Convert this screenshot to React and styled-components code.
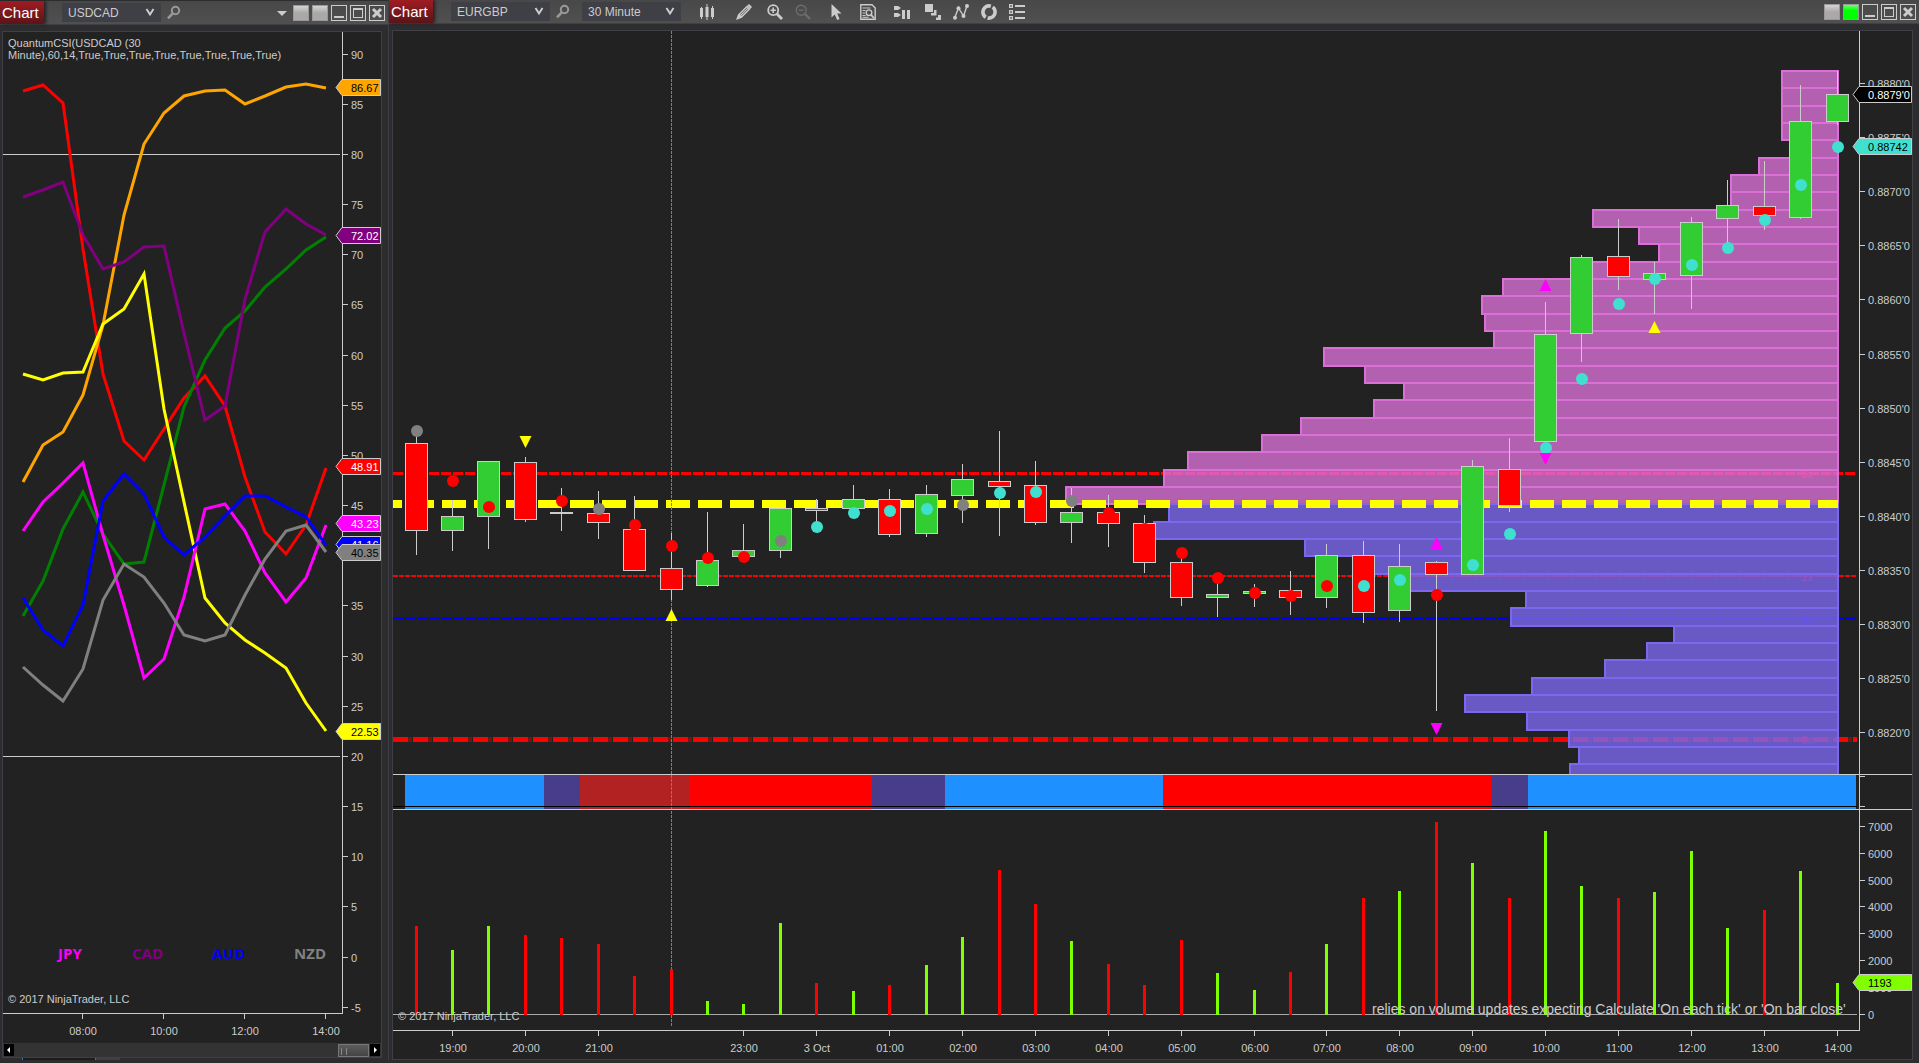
import React from "react";
import styled, { createGlobalStyle } from "styled-components";

const GlobalStyle = createGlobalStyle`
  * {
    box-sizing: border-box;
  }

  body {
    margin: 0;
    background: #2d2d30;
    color: #cccccc;
    font-family: "Liberation Sans", Arial, sans-serif;
    font-size: 12px;
  }
`;

const Desktop = styled.div`
  display: grid;
  grid-template-columns: 389fr 1530fr;
`;

const ChartWindow = styled.section`
  display: flex;
  flex-direction: column;
  min-width: 0;
  padding-top: ${(props) => (props.$raised ? 0 : 1)}px;
  border-right: ${(props) => (props.$raised ? "none" : "1px solid #3f3f46")};
  background: #2d2d30;
`;

const TitleBar = styled.header`
  display: flex;
  align-items: center;
  height: 24px;
  padding-right: ${(props) => props.$right}px;
  background: linear-gradient(#484848, #505050);
  border-bottom: 1px solid #3f3f46;
`;

const Tab = styled.h1`
  align-self: stretch;
  width: 44px;
  margin: 0 18px 0 0;
  padding-left: 2px;
  background: linear-gradient(#a01c22, #5a1418);
  box-shadow: 2px 0 3px #222222;
  color: #ffffff;
  font-size: 15px;
  font-weight: 400;
  line-height: 23px;
`;

const SelectBox = styled.label`
  position: relative;
  width: 99px;
  height: 19px;
  margin-left: ${(props) => props.$gap || 0}px;
`;

const Select = styled.select`
  appearance: none;
  width: 100%;
  height: 100%;
  padding: 0 20px 0 6px;
  border: none;
  border-radius: 0;
  background: #3f3f46;
  color: #cccccc;
  font-family: inherit;
  font-size: 12px;
`;

const Chevron = styled.svg`
  position: absolute;
  right: 6px;
  top: 5px;
  pointer-events: none;
`;

const IconButton = styled.button`
  display: flex;
  flex: none;
  width: 16px;
  height: 16px;
  margin-left: ${(props) => props.$gap}px;
  padding: 0;
  border: none;
  background: none;
  color: ${(props) => (props.$dim ? "#6c6c6c" : "#cccccc")};
`;

const WindowButtons = styled.div`
  display: flex;
  align-items: center;
  gap: 3px;
  margin-left: auto;
`;

const WindowButton = styled.button`
  display: flex;
  width: 16px;
  height: 16px;
  padding: 0;
  border: 1px solid #cccccc;
  background: none;
  color: #cccccc;
`;

const LinkButton = styled(WindowButton)`
  border-color: #999999;
  background: ${(props) =>
    props.$on
      ? "linear-gradient(#6cff6c, #00ff00 40%)"
      : "linear-gradient(#d4d4d4, #aca8a8 50%)"};
`;

const Frame = styled.div`
  margin: 6px ${(props) => props.$right}px 0 ${(props) => props.$left}px;
  border: 1px solid #3f3f46;
  background: #222222;
`;

const Plot = styled.svg`
  display: block;
  width: 100%;
  height: auto;
  font-family: "Liberation Sans", Arial, sans-serif;
  font-size: 11px;
`;

const ScrollBar = styled.div`
  display: flex;
  align-items: center;
  height: 14px;
  padding: 0 1px;
  background: #333333;
`;

const ScrollButton = styled.button`
  width: 10px;
  height: 12px;
  padding: 0;
  border: none;
  background: #000000;
  color: #ffffff;
`;

const ScrollThumb = styled.div`
  width: 31px;
  height: 13px;
  margin: 0 1px 0 auto;
  padding: 3px 2px;
  border: 1px solid #777777;
  background: linear-gradient(#5c5c5c, #444444);

  &::before {
    content: "";
    display: block;
    width: 4px;
    height: 7px;
    border: 1px solid #888888;
    border-width: 0 1px;
  }
`;

const Taskbar = styled.footer`
  display: flex;
  flex: 1;
  padding-left: ${(props) => props.$left}px;
`;

const TaskTab = styled.div`
  width: 74px;
  border: 1px solid #1c7ec8;
  border-width: 0 1px;
  background: #1c1c1c;
`;

const TaskAdd = styled.div`
  width: 24px;
  background: #3f3f46;
`;

const RED = "#ff0000";
const GREEN = "#32cd32";
const GRAY = "#808080";
const CYAN = "#40e0d0";
const LINE = "#cccccc";

/* strength chart */

const strengthX = [23, 43, 63, 83, 103, 124, 144, 164, 184, 205, 225, 245, 265, 286, 306, 326];

const strength = [
  { color: RED, y: [91, 85, 103, 249, 374, 441, 460, 429, 398, 376, 406, 477, 532, 554, 525, 468] },
  { color: "#008000", y: [616, 581, 529, 492, 534, 564, 562, 485, 407, 360, 328, 311, 287, 269, 250, 237] },
  { color: "#ffa500", y: [482, 445, 432, 395, 325, 215, 144, 113, 96, 91, 90, 104, 96, 87, 84, 88] },
  { color: "#ffff00", y: [374, 380, 373, 372, 324, 309, 274, 409, 502, 598, 623, 640, 653, 668, 703, 731] },
  { color: "#ff00ff", y: [531, 502, 483, 463, 535, 605, 678, 659, 597, 509, 504, 531, 573, 602, 578, 525] },
  { color: "#800080", y: [197, 190, 182, 235, 269, 262, 247, 246, 333, 420, 406, 299, 232, 209, 224, 235] },
  { color: "#0000ff", y: [598, 630, 646, 605, 501, 474, 494, 537, 555, 537, 516, 496, 496, 507, 517, 545] },
  { color: GRAY, y: [667, 685, 701, 669, 600, 564, 577, 603, 635, 641, 635, 595, 559, 531, 525, 552] },
];

const strengthTags = [
  { y: 87, fill: "#ffa500", ink: "#000000", text: "86.67" },
  { y: 235, fill: "#800080", ink: "#ffffff", text: "72.02" },
  { y: 466, fill: RED, ink: "#ffffff", text: "48.91" },
  { y: 523, fill: "#ff00ff", ink: "#ffffff", text: "43.23" },
  { y: 544, fill: "#0000ff", ink: "#ffffff", text: "41.16" },
  { y: 552, fill: GRAY, ink: "#000000", text: "40.35" },
  { y: 731, fill: "#ffff00", ink: "#000000", text: "22.53" },
];

// 40 stays off the scale while the price tags cover it
const strengthScale = [90, 85, 80, 75, 70, 65, 60, 55, 50, 45, 35, 30, 25, 20, 15, 10, 5, 0, -5];

const strengthTimes = [
  { x: 82, text: "08:00" },
  { x: 163, text: "10:00" },
  { x: 244, text: "12:00" },
  { x: 325, text: "14:00" },
];

const currencies = [
  { x: 58, text: "JPY", color: "#ff00ff" },
  { x: 132, text: "CAD", color: "#800080" },
  { x: 212, text: "AUD", color: "#0000ff" },
  { x: 294, text: "NZD", color: "#808080" },
];

/* price chart: high, body top, body bottom, low, rising, dot y, dot color, volume top, volume up */

const bars = [
  [436, 443, 531, 555, 0, 431, GRAY, 926, 0],
  [500, 516, 531, 551, 1, 481, RED, 950, 1],
  [461, 461, 517, 549, 1, 507, RED, 926, 1],
  [457, 462, 520, 522, 0, null, null, 935, 0],
  [488, 512, 514, 531, 0, 501, RED, 938, 0],
  [491, 513, 523, 539, 0, 509, GRAY, 944, 0],
  [496, 529, 571, 571, 0, 525, RED, 976, 0],
  [533, 568, 590, 600, 0, 546, RED, 969, 0],
  [512, 560, 586, 587, 1, 558, RED, 1001, 1],
  [524, 550, 557, 557, 1, 557, RED, 1004, 1],
  [508, 508, 551, 558, 1, 541, GRAY, 923, 1],
  [499, 508, 511, 527, 0, 527, CYAN, 983, 0],
  [485, 499, 509, 509, 1, 513, CYAN, 991, 1],
  [489, 499, 535, 537, 0, 511, CYAN, 985, 0],
  [485, 494, 534, 537, 1, 509, CYAN, 965, 1],
  [464, 479, 496, 523, 1, 505, GRAY, 937, 1],
  [431, 481, 487, 536, 0, 493, CYAN, 870, 0],
  [461, 485, 523, 525, 0, 492, CYAN, 904, 0],
  [488, 512, 523, 543, 1, 501, GRAY, 941, 1],
  [495, 512, 524, 547, 0, 513, RED, 964, 0],
  [515, 523, 563, 573, 0, 529, RED, 985, 0],
  [556, 562, 598, 606, 0, 553, RED, 940, 0],
  [575, 594, 598, 617, 1, 578, RED, 973, 1],
  [584, 591, 594, 607, 1, 593, RED, 990, 1],
  [571, 590, 598, 615, 0, 596, RED, 972, 0],
  [544, 555, 598, 608, 1, 586, RED, 944, 1],
  [541, 555, 613, 623, 0, 586, CYAN, 898, 0],
  [544, 566, 611, 622, 1, 580, CYAN, 891, 1],
  [561, 562, 575, 711, 0, 595, RED, 822, 0],
  [460, 466, 575, 575, 1, 565, CYAN, 863, 1],
  [438, 469, 506, 512, 0, 534, CYAN, 898, 0],
  [302, 334, 442, 442, 1, 448, CYAN, 831, 1],
  [255, 257, 334, 362, 1, 379, CYAN, 886, 1],
  [219, 256, 277, 290, 0, 304, CYAN, 898, 0],
  [262, 273, 280, 314, 1, 279, CYAN, 892, 1],
  [217, 222, 276, 309, 1, 265, CYAN, 851, 1],
  [180, 205, 219, 248, 1, 248, CYAN, 928, 1],
  [161, 206, 216, 230, 0, 220, CYAN, 910, 0],
  [85, 121, 218, 219, 1, 185, CYAN, 871, 1],
  [71, 94, 122, 125, 1, 147, CYAN, 983, 1],
];

const barX = (i) => Math.floor(416.05 + i * 36.435);

const signals = [
  { bar: 3, y: 436, down: true, color: "#ffff00" },
  { bar: 7, y: 609, color: "#ffff00" },
  { bar: 28, y: 537, color: "#ff00ff" },
  { bar: 28, y: 723, down: true, color: "#ff00ff" },
  { bar: 31, y: 279, color: "#ff00ff" },
  { bar: 31, y: 453, down: true, color: "#ff00ff" },
  { bar: 34, y: 321, color: "#ffff00" },
];

// left edge of each volume profile row, from the top down
const profile = [
  1781, 1781, 1781, 1781, 1797, 1758, 1730, 1730, 1592, 1638, 1658, 1585, 1502,
  1481, 1484, 1493, 1323, 1364, 1403, 1373, 1300, 1261, 1187, 1163, 1065, 1168,
  1153, 1304, 1365, 1395, 1525, 1510, 1673, 1646, 1604, 1531, 1464, 1526, 1568,
  1578, 1569,
];
const PROFILE_UPPER = 25;
const profileY = (i) => Math.round(70 + i * 17.33);

const levels = [
  { y: 473, width: 3, on: 10, gap: 2, color: RED, shade: "#7a1010", text: "3x" },
  { y: 576, width: 2, on: 5, gap: 1, color: RED, shade: "#7a1010", text: "2x" },
  { y: 618, width: 3, on: 10, gap: 2, color: "#0000ff", shade: "#101070", text: "3x" },
  { y: 739, width: 5, on: 15, gap: 5, color: RED, shade: "#7a1010", text: "5x" },
];

const trend = [
  { x: 405, end: 544, color: "#1e90ff" },
  { x: 544, end: 580, color: "#483d8b" },
  { x: 580, end: 690, color: "#b22222" },
  { x: 690, end: 872, color: RED },
  { x: 872, end: 945, color: "#483d8b" },
  { x: 945, end: 1163, color: "#1e90ff" },
  { x: 1163, end: 1491, color: RED },
  { x: 1491, end: 1528, color: "#483d8b" },
  { x: 1528, end: 1856, color: "#1e90ff" },
];

const prices = [
  "0.8880'0", "0.8875'0", "0.8870'0", "0.8865'0", "0.8860'0", "0.8855'0", "0.8850'0",
  "0.8845'0", "0.8840'0", "0.8835'0", "0.8830'0", "0.8825'0", "0.8820'0",
];

const volumes = [7000, 6000, 5000, 4000, 3000, 2000, 1000, 0];

const times = [
  [1, "19:00"], [3, "20:00"], [5, "21:00"], [9, "23:00"], [11, "3 Oct"], [13, "01:00"],
  [15, "02:00"], [17, "03:00"], [19, "04:00"], [21, "05:00"], [23, "06:00"], [25, "07:00"],
  [27, "08:00"], [29, "09:00"], [31, "10:00"], [33, "11:00"], [35, "12:00"], [37, "13:00"],
  [39, "14:00"],
];

function Tag({ x, y, right, fill, ink, text }) {
  return (
    <g>
      <path
        d={`M${x} ${y + 0.5}L${x + 6} ${y - 7.5}H${right}V${y + 8.5}H${x + 6}Z`}
        fill={fill}
        stroke={LINE}
      />
      <text x={x + 15} y={y + 5} fill={ink}>
        {text}
      </text>
    </g>
  );
}

function StrengthPlot() {
  return (
    <Plot viewBox="3 32 378 1011" role="img" aria-label="Currency strength">
      <g fill={LINE} shapeRendering="crispEdges">
        <rect x="3" y="154" width="337" height="1" />
        <rect x="3" y="756" width="337" height="1" />
        <rect x="342" y="32" width="1" height="982" />
        <rect x="3" y="1013" width="340" height="1" />
        {strengthTimes.map((t) => (
          <rect key={t.text} x={t.x} y="1014" width="1" height="5" />
        ))}
      </g>
      {strengthScale.map((v) => {
        const y = Math.round(154 + (80 - v) * 10.033);
        return (
          <g key={v} fill={LINE}>
            <rect x="343" y={y} width="5" height="1" />
            <text x="351" y={y + 5}>{v}</text>
          </g>
        );
      })}
      {strength.map((s) => (
        <polyline
          key={s.color}
          points={s.y.map((y, i) => `${strengthX[i]},${y}`).join(" ")}
          fill="none"
          stroke={s.color}
          strokeWidth="3"
        />
      ))}
      {strengthTags.map((t) => (
        <Tag key={t.text} x={336} right={380.5} {...t} />
      ))}
      <g fill={LINE}>
        <text x="8" y="47">QuantumCSI(USDCAD (30</text>
        <text x="8" y="59">Minute),60,14,True,True,True,True,True,True,True,True)</text>
        <text x="8" y="1003">© 2017 NinjaTrader, LLC</text>
        {strengthTimes.map((t) => (
          <text key={t.text} x={t.x + 1} y="1035" textAnchor="middle">
            {t.text}
          </text>
        ))}
      </g>
      <g fontFamily="Open Sans, sans-serif" fontSize="15" fontWeight="700">
        {currencies.map((c) => (
          <text key={c.text} x={c.x} y="959" fill={c.color}>
            {c.text}
          </text>
        ))}
      </g>
    </Plot>
  );
}

function Levels() {
  return levels.map((l) => {
    const y = l.width % 2 ? l.y + 0.5 : l.y;
    return (
      <g key={l.y} strokeWidth={l.width} shapeRendering="crispEdges">
        <path d={`M393 ${y}H1857`} stroke={l.shade} strokeDasharray={`${l.on + l.gap - 1} 1`} />
        <path d={`M393 ${y}H1857`} stroke={l.color} strokeDasharray={`${l.on} ${l.gap}`} />
        <text x="1807" y={l.y + 5} fill={l.color} textAnchor="middle">
          {l.text}
        </text>
      </g>
    );
  });
}

function Profile() {
  return (
    <g strokeWidth="2" shapeRendering="crispEdges" clipPath="url(#pricePane)">
      {profile.map((x, i) => {
        const y = profileY(i);
        const color = i < PROFILE_UPPER ? "#da70d6" : "#7b68ee";
        return (
          <g key={i}>
            <rect x={x} y={y} width={1838 - x} height={profileY(i + 1) - y} fill={color} fillOpacity="0.8" />
            <rect x={x + 1} y={y + 1} width={1837 - x} height={profileY(i + 1) - y} fill="none" stroke={color} />
          </g>
        );
      })}
    </g>
  );
}

function Candles() {
  return bars.map(([high, top, bottom, low, up, dot, dotColor], i) => {
    const x = barX(i);
    return (
      <g key={i}>
        <rect x={x} y={high} width="1" height={low - high} fill={LINE} />
        <rect
          x={x - 10.5}
          y={top + 0.5}
          width="22"
          height={bottom - top - 1}
          fill={up ? GREEN : RED}
          stroke={LINE}
        />
        {dot && <circle cx={x + 1} cy={dot} r="6" fill={dotColor} />}
      </g>
    );
  });
}

function Signals() {
  return signals.map((s) => {
    const x = barX(s.bar) + 0.5;
    const d = s.down
      ? `M${x - 6} ${s.y}h12l-6 12z`
      : `M${x} ${s.y}l6 12h-12z`;
    return <path key={`${s.bar}-${s.y}`} d={d} fill={s.color} />;
  });
}

function PricePlot() {
  return (
    <Plot viewBox="393 31 1519 1028" role="img" aria-label="EURGBP 30 minute candles with volume">
      <clipPath id="pricePane">
        <rect x="393" y="31" width="1466" height="743" />
      </clipPath>

      <Levels />
      <Profile />
      <path d="M393 504H1838" stroke="#ffff00" strokeWidth="8" strokeDasharray="24 8" strokeDashoffset="15" />

      <g shapeRendering="crispEdges">
        {trend.map((t) => (
          <rect key={t.x} x={t.x} y="775" width={t.end - t.x} height="34" fill={t.color} />
        ))}
        <rect x="393" y="806" width="1464" height="1" fill="#000000" />
        <rect x="393" y="1014" width="1464" height="1" fill="#aaaaaa" />
        <path d="M671.5 31V1027" stroke="#808080" strokeDasharray="3 1" />
        {bars.map((b, i) => (
          <rect key={i} x={barX(i) - 1} y={b[7]} width="3" height={1015 - b[7]} fill={b[8] ? "#7fff00" : RED} />
        ))}
      </g>

      <Candles />
      <Signals />

      <g fill={LINE} shapeRendering="crispEdges">
        <rect x="393" y="774" width="1519" height="1" />
        <rect x="393" y="809" width="1519" height="1" />
        <rect x="393" y="1030" width="1467" height="1" />
        <rect x="1859" y="31" width="1" height="1000" />
        <rect x="1860" y="776" width="5" height="1" />
        <rect x="1860" y="806" width="5" height="1" />
      </g>

      <g fill={LINE}>
        {prices.map((p, i) => {
          const y = Math.round(83 + i * 54.1);
          return (
            <g key={p}>
              <rect x="1860" y={y} width="5" height="1" />
              <text x="1868" y={y + 5}>{p}</text>
            </g>
          );
        })}
        {volumes.map((v) => {
          const y = Math.round(1014 - v * 0.0269);
          return (
            <g key={v}>
              <rect x="1860" y={y} width="5" height="1" />
              <text x="1868" y={y + 5}>{v}</text>
            </g>
          );
        })}
        {times.map(([bar, text]) => (
          <g key={text}>
            <rect x={barX(bar)} y="1031" width="1" height="5" />
            <text x={barX(bar) + 1} y="1052" textAnchor="middle">
              {text}
            </text>
          </g>
        ))}
        <text x="398" y="1020">© 2017 NinjaTrader, LLC</text>
        <text x="1372" y="1014" fontSize="14">
          relies on volume updates expecting Calculate 'On each tick' or 'On bar close'
        </text>
      </g>

      <Tag x={1853} y={94} right={1911.5} fill="#000000" ink="#ffffff" text="0.8879'0" />
      <Tag x={1853} y={146} right={1911.5} fill={CYAN} ink="#000000" text="0.88742" />
      <Tag x={1853} y={982} right={1911.5} fill="#7fff00" ink="#000000" text="1193" />
    </Plot>
  );
}

function Icon({ children }) {
  return (
    <svg width="16" height="16" viewBox="0 0 16 16" fill="none" stroke="currentColor" strokeWidth="2">
      {children}
    </svg>
  );
}

function SearchIcon() {
  return (
    <Icon>
      <circle cx="9.5" cy="5.5" r="3.7" stroke="#999999" />
      <path d="M6.8 8.4L2 13.4" stroke="#999999" strokeWidth="2.6" />
    </Icon>
  );
}

const tools = [
  {
    name: "Chart style",
    gap: 19,
    icon: (
      <path
        d="M0 4h1V3h1v1h1v9H2v2H1v-2H0zM5.500 3h1V0h1v3h1v10h-1v3h-1v-3h-1zM11 4h1V2h1v2h1v9h-1v2h-1v-2h-1z"
        fill="currentColor"
        stroke="none"
      />
    ),
  },
  {
    name: "Drawing tools",
    gap: 20,
    icon: (
      <>
        <path d="M3 10.5L11 2.5l2.6 2.6-8 8z" strokeWidth="1.4" />
        <path d="M4.5 11.7l8-8" strokeWidth="1.2" />
        <path d="M2.2 10L6 13.8 0 16zM11.3 1.5L13 0l3 3-1.5 1.7z" fill="currentColor" stroke="none" />
      </>
    ),
  },
  {
    name: "Zoom in",
    gap: 15,
    icon: (
      <>
        <circle cx="6.2" cy="6.2" r="5" strokeWidth="1.8" />
        <path d="M3.5 6.2h5.4M6.2 3.5v5.4" strokeWidth="1.6" />
        <path d="M9.8 9.8l5.2 5.2" strokeWidth="2.8" />
      </>
    ),
  },
  {
    name: "Zoom out",
    gap: 12,
    dim: true,
    icon: (
      <>
        <circle cx="6.2" cy="6.2" r="5" strokeWidth="1.4" />
        <path d="M3.7 6.2h5" strokeWidth="1.4" />
        <path d="M9.8 9.8l5.2 5.2" strokeWidth="2.4" />
      </>
    ),
  },
  {
    name: "Pointer",
    gap: 18,
    icon: <path d="M2.5 0v13.5l3.3-3 2.4 5.5 2.4-1.1-2.4-5.3h4.3z" fill="currentColor" stroke="none" />,
  },
  {
    name: "Data box",
    gap: 15,
    icon: (
      <>
        <path d="M.8 .8H12l3.2 3.2v11.2H.8z" strokeWidth="1.4" />
        <path d="M2.5 4h8M2.5 6.5h3M2.5 9h2.5M2.5 11.5h3M2.5 13.3h6" strokeWidth="1" />
        <circle cx="9" cy="8.7" r="2.8" strokeWidth="1.4" />
        <path d="M11 10.8l3 3.2" strokeWidth="1.8" />
      </>
    ),
  },
  {
    name: "Chart trader",
    gap: 18,
    icon: (
      <path
        d="M0 2h4l3 2-3 2H0zM0 9h4l3 2-3 2H0zM8 6h3v9H8zM13 6h3v9h-3z"
        fill="currentColor"
        stroke="none"
      />
    ),
  },
  {
    name: "Arrange",
    gap: 15,
    icon: (
      <path
        d="M0 0h8v8H0zM9 6v3H6v2.500h5.500V6zM13 11v2.500h-2V16h5v-5z"
        fill="currentColor"
        stroke="none"
      />
    ),
  },
  {
    name: "Indicators",
    gap: 12,
    icon: (
      <>
        <path d="M2 13L5.500 4l5 8L14 2" strokeWidth="1.4" />
        <g fill="currentColor" stroke="none">
          <circle cx="2" cy="13.700" r="2" />
          <circle cx="5.500" cy="4.200" r="2" />
          <circle cx="10.500" cy="12" r="2" />
          <circle cx="14" cy="2" r="2" />
        </g>
      </>
    ),
  },
  {
    name: "Strategies",
    gap: 12,
    icon: <circle cx="8" cy="8" r="6.1" strokeWidth="3.6" strokeDasharray="17.160 2" strokeDashoffset="6.400" />,
  },
  {
    name: "Properties",
    gap: 12,
    icon: (
      <>
        <path d="M.6 .6h2.800v2.800H.6zM.6 6.600h2.800v2.800H.6zM.6 12.600h2.800v2.800H.6z" strokeWidth="1.2" />
        <path d="M6 2h10M6 8h10M6 14h10" />
      </>
    ),
  },
];

function Dropdown({ name, value, gap }) {
  return (
    <SelectBox $gap={gap}>
      <Select aria-label={name} defaultValue={value}>
        <option>{value}</option>
      </Select>
      <Chevron width="10" height="9" viewBox="0 0 10 9" fill="none" stroke={LINE} strokeWidth="2">
        <path d="M1.500 1L5 6.500 8.500 1" />
      </Chevron>
    </SelectBox>
  );
}

function WindowControls({ linked, menu }) {
  return (
    <WindowButtons>
      {menu && (
        <IconButton aria-label="Window menu">
          <Icon>
            <path d="M3 6h10l-5 5z" fill="currentColor" stroke="none" />
          </Icon>
        </IconButton>
      )}
      <LinkButton aria-label="Link instrument" />
      <LinkButton aria-label="Link interval" $on={linked} />
      <WindowButton aria-label="Minimize">
        <svg width="14" height="14">
          <rect x="2" y="10" width="10" height="2" fill={LINE} />
        </svg>
      </WindowButton>
      <WindowButton aria-label="Maximize">
        <svg width="14" height="14">
          <path d="M2 2h10v10H2zM3 4v7h8V4z" fill={LINE} fillRule="evenodd" />
        </svg>
      </WindowButton>
      <WindowButton aria-label="Close">
        <svg width="14" height="14">
          <path d="M3 3l8 8M11 3l-8 8" stroke={LINE} strokeWidth="3" />
        </svg>
      </WindowButton>
    </WindowButtons>
  );
}

function App() {
  return (
    <>
      <GlobalStyle />
      <Desktop>
        <ChartWindow>
          <TitleBar $right={3}>
            <Tab>Chart</Tab>
            <Dropdown name="Instrument" value="USDCAD" />
            <IconButton $gap={5} aria-label="Search instrument">
              <SearchIcon />
            </IconButton>
            <WindowControls menu />
          </TitleBar>
          <Frame $left={2} $right={6}>
            <StrengthPlot />
            <ScrollBar>
              <ScrollButton aria-label="Scroll left">
                <svg width="10" height="12">
                  <path d="M6 3v6L3 6z" fill="#ffffff" />
                </svg>
              </ScrollButton>
              <ScrollThumb />
              <ScrollButton aria-label="Scroll right">
                <svg width="10" height="12">
                  <path d="M4 3v6l3-3z" fill="#ffffff" />
                </svg>
              </ScrollButton>
            </ScrollBar>
          </Frame>
          <Taskbar $left={22}>
            <TaskTab />
            <TaskAdd />
          </Taskbar>
        </ChartWindow>

        <ChartWindow $raised>
          <TitleBar $right={3}>
            <Tab>Chart</Tab>
            <Dropdown name="Instrument" value="EURGBP" />
            <IconButton $gap={5} aria-label="Search instrument">
              <SearchIcon />
            </IconButton>
            <Dropdown name="Interval" value="30 Minute" gap={11} />
            {tools.map((t) => (
              <IconButton key={t.name} $gap={t.gap} $dim={t.dim} disabled={t.dim} aria-label={t.name}>
                <Icon>{t.icon}</Icon>
              </IconButton>
            ))}
            <WindowControls linked />
          </TitleBar>
          <Frame $left={3} $right={6}>
            <PricePlot />
          </Frame>
          <Taskbar $left={23}>
            <TaskTab />
            <TaskAdd />
          </Taskbar>
        </ChartWindow>
      </Desktop>
    </>
  );
}

export default App;
